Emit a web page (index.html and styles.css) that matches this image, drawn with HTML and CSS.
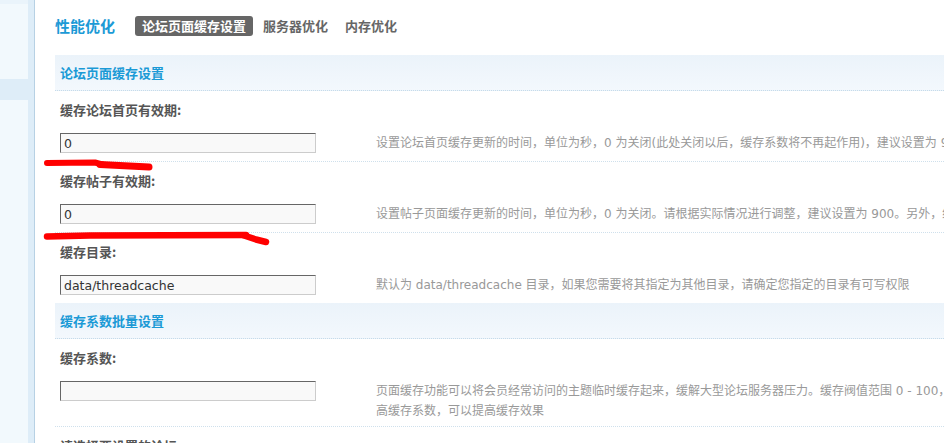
FILE: index.html
```html
<!DOCTYPE html>
<html lang="zh-CN">
<head>
<meta charset="utf-8">
<title>性能优化</title>
<link rel="stylesheet" href="styles.css">
</head>
<body>
<div class="page">
  <aside class="side">
    <div class="side-menu">
      <div class="side-top"></div>
      <div class="side-item active"></div>
    </div>
    <div class="side-strip"></div>
  </aside>
  <main class="main">
    <div class="header">
      <h3 class="title">性能优化</h3>
      <ul class="tabs">
        <li class="tab current">论坛页面缓存设置</li>
        <li class="tab">服务器优化</li>
        <li class="tab">内存优化</li>
      </ul>
    </div>

    <div class="section">论坛页面缓存设置</div>

    <div class="setting bordered">
      <div class="label">缓存论坛首页有效期:</div>
      <div class="row">
        <input class="txt" type="text" value="0">
        <div class="tips">设置论坛首页缓存更新的时间，单位为秒，0 为关闭(此处关闭以后，缓存系数将不再起作用)，建议设置为 900</div>
      </div>
    </div>

    <div class="setting bordered">
      <div class="label">缓存帖子有效期:</div>
      <div class="row">
        <input class="txt" type="text" value="0">
        <div class="tips">设置帖子页面缓存更新的时间，单位为秒，0 为关闭。请根据实际情况进行调整，建议设置为 900。另外，缓存时间的设置值不能过大</div>
      </div>
    </div>

    <div class="setting">
      <div class="label">缓存目录:</div>
      <div class="row">
        <input class="txt" type="text" value="data/threadcache">
        <div class="tips">默认为 data/threadcache 目录，如果您需要将其指定为其他目录，请确定您指定的目录有可写权限</div>
      </div>
    </div>

    <div class="section">缓存系数批量设置</div>

    <div class="setting bordered">
      <div class="label">缓存系数:</div>
      <div class="row">
        <input class="txt" type="text" value="">
        <div class="tips">页面缓存功能可以将会员经常访问的主题临时缓存起来，缓解大型论坛服务器压力。缓存阀值范围 0 - 100，建议设置为 40 ，0 为关闭。在磁盘空间允许的情况下，适当调<br>高缓存系数，可以提高缓存效果</div>
      </div>
    </div>

    <div class="setting">
      <div class="label">请选择要设置的论坛:</div>
    </div>
  </main>

  <svg class="marks" width="944" height="443" viewBox="0 0 944 443" aria-hidden="true">
    <polyline points="47,163 95,162.5 104,165" fill="none" stroke="#ff0000" stroke-width="6" stroke-linecap="round" stroke-linejoin="round"/>
    <polyline points="100,164.5 149,167" fill="none" stroke="#ff0000" stroke-width="7" stroke-linecap="round" stroke-linejoin="round"/>
    <polyline points="47,236.5 90,235.5 246,235" fill="none" stroke="#ff0000" stroke-width="6.5" stroke-linecap="round" stroke-linejoin="round"/>
    <polyline points="244,235.5 256,239.5 266,242" fill="none" stroke="#ff0000" stroke-width="6.5" stroke-linecap="round" stroke-linejoin="round"/>
  </svg>
</div>
</body>
</html>
```

FILE: styles.css
```css
html, body {
  margin: 0;
  padding: 0;
  background: #fff;
}

body {
  width: 944px;
  height: 443px;
  overflow: hidden;
  font-family: "Noto Sans CJK SC", "DejaVu Sans", sans-serif;
  font-size: 12px;
  color: #555;
}

.page {
  position: relative;
  display: flex;
  height: 443px;
  overflow: hidden;
}

/* left sidebar */
.side {
  display: flex;
  flex: 0 0 35px;
  box-sizing: border-box;
  border-right: 1px solid #b7d1e4;
}

.side-menu {
  width: 28px;
  background: #f2f9fd;
}

.side-top {
  height: 4px;
  background: #eaf4fb;
}

.side-item {
  height: 21px;
}

.side-item.active {
  margin-top: 75px;
  background: #deedf8;
}

.side-strip {
  width: 6px;
  background: #deedf8;
}

/* main */
.main {
  flex: 1 1 auto;
  min-width: 0;
  padding-left: 20px;
  overflow: hidden;
}

.header {
  display: flex;
  align-items: center;
  box-sizing: border-box;
  height: 55px;
  padding-bottom: 13px;
  padding-top: 9px;
}

.title {
  margin: 0 20px 0 0;
  font-size: 15px;
  font-weight: 700;
  line-height: 20px;
  color: #1b9ad6;
}

.tabs {
  display: flex;
  gap: 3px;
  margin: 0;
  padding: 0;
  list-style: none;
}

.tab {
  padding: 0 7px;
  height: 20px;
  line-height: 20px;
  font-size: 13px;
  font-weight: 700;
  color: #666;
  border-radius: 3px;
  white-space: nowrap;
}

.tab.current {
  background: #666;
  color: #fff;
}

.section {
  box-sizing: border-box;
  height: 36px;
  padding-left: 5px;
  line-height: 35px;
  font-size: 13px;
  font-weight: 700;
  color: #1b9ad6;
  background: linear-gradient(#ebf3fa, #f3f8fd);
  border-bottom: 1px dotted #c6dbea;
}

.label {
  box-sizing: border-box;
  height: 36px;
  padding: 11px 5px 0;
  line-height: 16px;
  font-size: 13px;
  font-weight: 700;
  color: #555;
  white-space: nowrap;
}

.row {
  display: flex;
  align-items: flex-start;
  padding: 6px 0 0 5px;
}

.setting.bordered .row {
  border-bottom: 1px dotted #cfe0ec;
}

.txt {
  flex: 0 0 auto;
  box-sizing: border-box;
  width: 256px;
  height: 20px;
  margin: 0 0 8px;
  padding: 0 3px;
  border: 1px solid;
  border-color: #666 #ccc #ccc #666;
  background: #f9f9f9;
  font-family: "DejaVu Sans", "Noto Sans CJK SC", sans-serif;
  font-size: 12.5px;
  color: #333;
  outline: none;
}

.tips {
  margin-left: 60px;
  padding-bottom: 5px;
  line-height: 20px;
  font-family: "DejaVu Sans", "Noto Sans CJK SC", sans-serif;
  font-size: 12px;
  color: #999;
  white-space: nowrap;
}

/* hand-drawn red annotations over the content */
.marks {
  position: absolute;
  left: 0;
  top: 0;
  pointer-events: none;
}
```
